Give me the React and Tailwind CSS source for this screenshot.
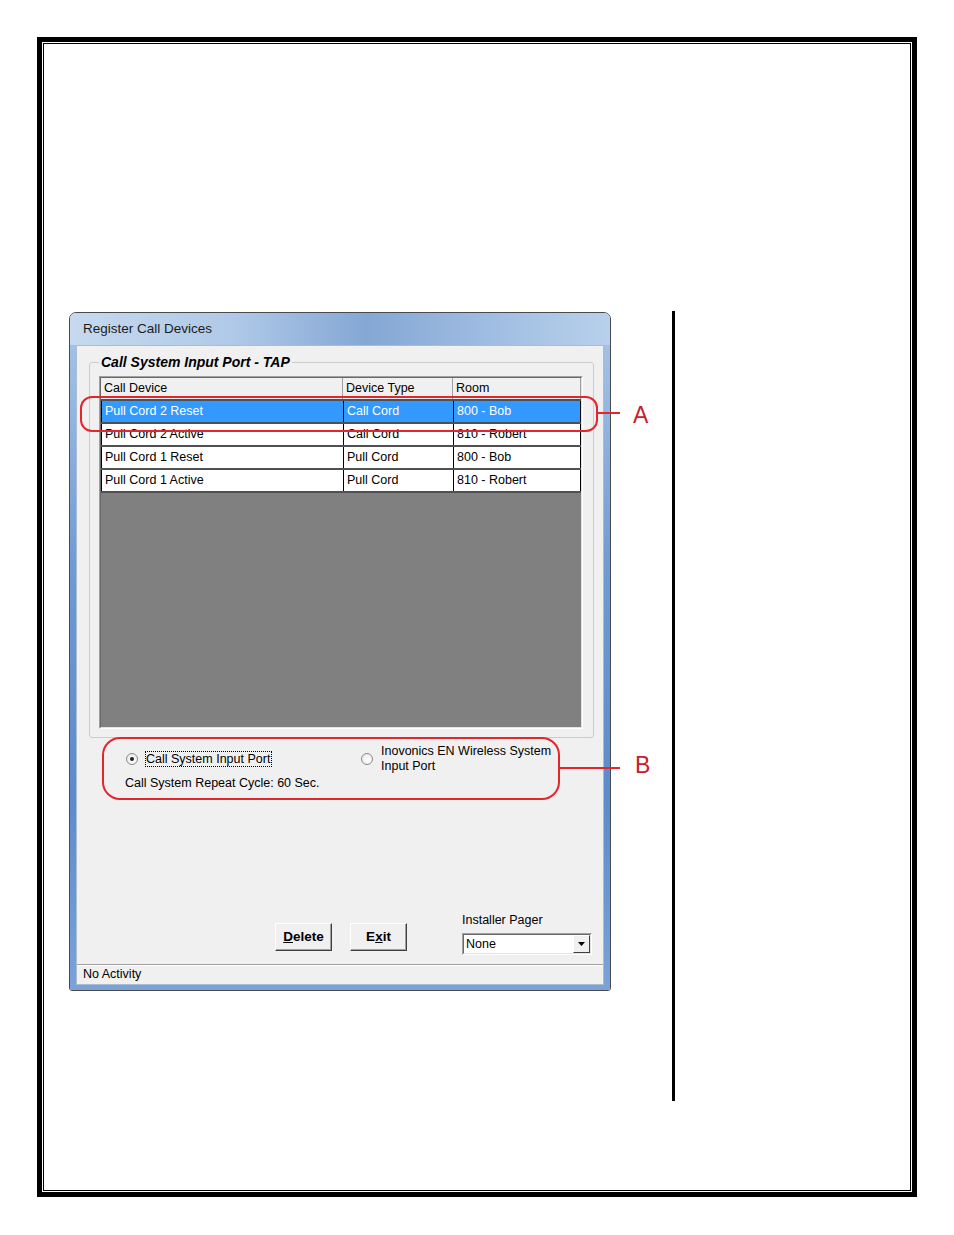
import React from 'react';

const rows = [
  { device: 'Pull Cord 2 Reset', type: 'Call Cord', room: '800 - Bob', selected: true },
  { device: 'Pull Cord 2 Active', type: 'Call Cord', room: '810 - Robert' },
  { device: 'Pull Cord 1 Reset', type: 'Pull Cord', room: '800 - Bob' },
  { device: 'Pull Cord 1 Active', type: 'Pull Cord', room: '810 - Robert' },
];

function Radio({ checked }) {
  return (
    <div className="w-[12px] h-[12px] rounded-full border border-[#8a8a8a] bg-[radial-gradient(circle_at_60%_60%,#ffffff,#e4e4e4)] flex items-center justify-center shrink-0">
      {checked && <div className="w-[4px] h-[4px] rounded-full bg-[#1f1f1f]" />}
    </div>
  );
}

function WinButton({ children }) {
  return (
    <div className="mt-[10px] w-[57px] h-[28px] bg-[#f0f0f0] border border-t-white border-l-white border-r-[#404040] border-b-[#404040] shadow-[inset_-1px_-1px_#a0a0a0] flex items-center justify-center text-[13.5px] font-bold text-black">
      {children}
    </div>
  );
}

function Dialog() {
  return (
    <div className="w-[542px] h-[679px] rounded-t-[7px] rounded-b-[3px] border border-[#4a4a4a] overflow-hidden flex flex-col">
      {/* title bar */}
      <div className="h-[32px] shrink-0 flex items-center pl-[13px] bg-[linear-gradient(90deg,#c6d9ee_0%,#b0c9e8_30%,#84a7d4_55%,#a0bde2_78%,#b8d0eb_100%)]">
        <span className="text-[13.5px] text-[#1b1b1b]">Register Call Devices</span>
      </div>

      {/* frame + client */}
      <div className="flex-1 px-[6px] pb-[5px] bg-[linear-gradient(180deg,#a3c1e6,#6f9ad2_35%,#5d8bcb_70%,#7aa3d8)]">
        <div className="h-full border border-[#a9bcd1] bg-[#f0f0f0] flex flex-col">
          <fieldset className="mt-[8px] ml-[12px] w-[505px] border border-[#cccccc] rounded-[3px] pl-[9px] pr-[10px] pb-[8px]">
            <legend className="px-[2px] text-[14px] leading-[17px] font-bold italic text-black">
              Call System Input Port - TAP
            </legend>
            <div className="mt-[5px] h-[353px] border border-t-[#a0a0a0] border-l-[#a0a0a0] border-r-white border-b-white">
              <div className="h-full border border-t-[#696969] border-l-[#696969] border-r-[#e3e3e3] border-b-[#e3e3e3] bg-[#808080]">
                <div className="h-[21px] flex bg-[#f0f0f0] text-[12.5px] leading-[21px] text-black">
                  <div className="w-[242px] pl-[3px] border-r border-[#a0a0a0]">Call Device</div>
                  <div className="w-[110px] pl-[3px] border-r border-[#a0a0a0]">Device Type</div>
                  <div className="w-[128px] pl-[3px] border-r border-[#a0a0a0]">Room</div>
                </div>
                {rows.map((r, i) => (
                  <div
                    key={i}
                    className={`flex border-t-2 border-[#505050] text-[12.5px] leading-[21px] ${i === rows.length - 1 ? 'border-b-2' : ''} ${r.selected ? 'bg-[#3399ff] text-white' : 'bg-white text-black'}`}
                  >
                    <div className="w-[242px] pl-[3px] border-l border-black">{r.device}</div>
                    <div className="w-[110px] pl-[3px] border-l border-black">{r.type}</div>
                    <div className="w-[128px] pl-[3px] border-l border-r border-black">{r.room}</div>
                  </div>
                ))}
              </div>
            </div>
          </fieldset>

          {/* port selection */}
          <div className="mt-[6px] flex pl-[49px] text-[12.5px] text-black">
            <div className="w-[235px] h-[30px] flex items-center">
              <Radio checked />
              <span className="ml-[7px] border border-dotted border-black leading-[14px] pr-[1px]">Call System Input Port</span>
            </div>
            <div className="h-[30px] flex items-center">
              <Radio />
              <span className="ml-[8px] leading-[15px]">
                Inovonics EN Wireless System
                <br />
                Input Port
              </span>
            </div>
          </div>
          <div className="mt-[2px] pl-[48px] leading-[15px] text-[12.5px] text-black">Call System Repeat Cycle: 60 Sec.</div>

          {/* buttons */}
          <div className="mt-[122px] flex items-start pl-[198px]">
            <WinButton>
              <span><span className="underline">D</span>elete</span>
            </WinButton>
            <div className="ml-[18px]">
              <WinButton>
                <span>E<span className="underline">x</span>it</span>
              </WinButton>
            </div>
            <div className="ml-[55px] text-[12.5px] text-black">
              <div className="leading-[15px]">Installer Pager</div>
              <div className="mt-[5px] w-[130px] h-[22px] border border-t-[#a0a0a0] border-l-[#a0a0a0] border-r-white border-b-white">
                <div className="h-full border border-t-[#696969] border-l-[#696969] border-r-[#e3e3e3] border-b-[#e3e3e3] bg-white flex items-center">
                  <span className="flex-1 pl-[2px] leading-[18px]">None</span>
                  <div className="w-[17px] h-[18px] bg-[#f0f0f0] border border-t-white border-l-white border-r-[#404040] border-b-[#404040] flex items-center justify-center">
                    <svg width="7" height="4" viewBox="0 0 7 4">
                      <polygon points="0,0 7,0 3.5,4" fill="#000" />
                    </svg>
                  </div>
                </div>
              </div>
            </div>
          </div>

          {/* status bar */}
          <div className="mt-auto h-[20px] border-t border-[#a0a0a0] shadow-[inset_0_1px_#ffffff] pl-[6px] text-[12.5px] leading-[19px] text-black">
            No Activity
          </div>
        </div>
      </div>
    </div>
  );
}

export default function App() {
  return (
    <div className="w-[954px] h-[1235px] bg-white pt-[37px] pl-[37px] font-['Liberation_Sans',Arial,sans-serif]">
      <div className="w-[880px] h-[1160px] border-[5px] border-black p-[1px]">
        <div className="h-full border border-black">
          <div className="mt-[267px] ml-[25px] flex items-start">
            <div className="relative mt-[1px]">
              <Dialog />
              {/* callout A */}
              <div className="absolute left-[11px] top-[84px] w-[518px] h-[36px] border-[2.5px] border-[#e3262e] rounded-[12px]" />
              <div className="absolute left-[529px] top-[100px] w-[22px] h-[2px] bg-[#e3262e]" />
              <div className="absolute left-[564px] top-[92px] text-[23px] leading-none text-[#c8202a]">A</div>
              {/* callout B */}
              <div className="absolute left-[33px] top-[425px] w-[458px] h-[63px] border-[2.5px] border-[#e3262e] rounded-[18px]" />
              <div className="absolute left-[491px] top-[455px] w-[60px] h-[2px] bg-[#e3262e]" />
              <div className="absolute left-[566px] top-[442px] text-[23px] leading-none text-[#c8202a]">B</div>
            </div>
            <div className="ml-[61px] w-[3px] h-[790px] bg-black" />
          </div>
        </div>
      </div>
    </div>
  );
}
